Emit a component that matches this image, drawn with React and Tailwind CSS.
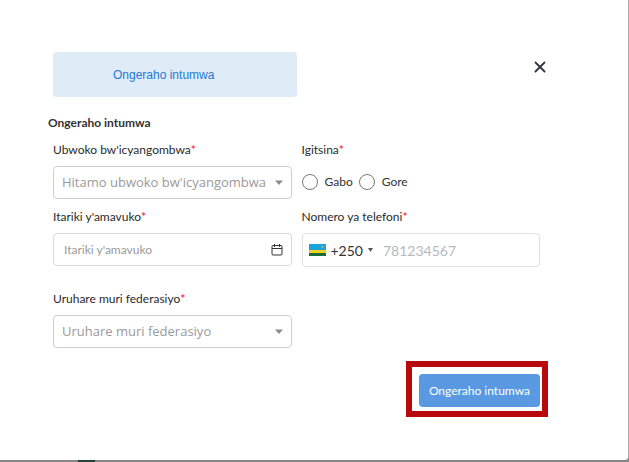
import { useState } from 'react'
import { X } from 'lucide-react'

function Label({ htmlFor, children }) {
  return (
    <label htmlFor={htmlFor} className="block mb-2 text-[12px] leading-4 text-[#2b2b2b]">
      {children}
      <span className="font-bold text-[#f5365c]">*</span>
    </label>
  )
}

function SelectField({ id, label, placeholder, options }) {
  return (
    <div>
      <Label htmlFor={id}>{label}</Label>
      <div className="relative">
        <select
          id={id}
          defaultValue=""
          className="block w-full h-[33px] appearance-none rounded border border-[#cfcfcf] bg-white pl-2 pr-6 text-[13px] text-[#9a9a9a] font-['Open_Sans',sans-serif] outline-none"
        >
          <option value="">{placeholder}</option>
          {options.map((o) => (
            <option key={o} value={o}>{o}</option>
          ))}
        </select>
        <svg className="absolute right-2 top-3.5 w-2.5 h-1.5 pointer-events-none" viewBox="0 0 10 6" fill="#8c8c8c">
          <path d="M1 0.5h8L5 5z" />
        </svg>
      </div>
    </div>
  )
}

function Flag() {
  return (
    <svg className="w-[17px] h-3 flex-shrink-0" viewBox="0 0 17 12">
      <rect width="17" height="6" fill="#1aa3dc" />
      <rect y="6" width="17" height="3" fill="#f2d21f" />
      <rect y="9" width="17" height="3" fill="#1c6b3a" />
      <circle cx="13.5" cy="2.8" r="1.1" fill="#a9c25a" />
    </svg>
  )
}

function CalendarIcon() {
  return (
    <svg className="w-3 h-3 flex-shrink-0" viewBox="0 0 12 12" fill="none" stroke="#333" strokeWidth="1">
      <rect x="1" y="1.5" width="10" height="9.5" rx="1" />
      <path d="M1 4.5h10M3.5 0v3M8.5 0v3" />
    </svg>
  )
}

function App() {
  const [gender, setGender] = useState('')
  const [birthDate, setBirthDate] = useState('')
  const [phone, setPhone] = useState('')

  return (
    <div className="min-h-screen flex flex-col bg-[#858585] font-['Lato',sans-serif]">
      <div className="flex-grow pt-13 pl-12 pr-[88px] bg-white border-r border-[#a8a8a8] rounded-br">
        {/* Header */}
        <div className="flex items-start justify-between pl-[5px]">
          <div className="w-1/2 h-[45px] flex items-center rounded bg-[#dfebf7] pl-15 text-[12px] text-[#1f78d8] font-['Liberation_Sans',sans-serif]">
            Ongeraho intumwa
          </div>
          <button type="button" aria-label="Funga" className="-mr-[9px] mt-1.5 text-[#2f3640]">
            <X size={18} strokeWidth={2.4} />
          </button>
        </div>

        <h2 className="mt-[18px] text-[12px] leading-4 font-bold text-[#333]">Ongeraho intumwa</h2>

        {/* Form */}
        <form className="mt-[11px] pl-[5px]" onSubmit={(e) => e.preventDefault()}>
          <div className="grid grid-cols-2 gap-x-2.5 gap-y-2.5">
            <SelectField
              id="document"
              label="Ubwoko bw'icyangombwa"
              placeholder="Hitamo ubwoko bw'icyangombwa"
              options={['Indangamuntu', 'Pasiporo']}
            />

            <fieldset>
              <legend className="mb-2 text-[12px] leading-4 text-[#2b2b2b]">
                Igitsina<span className="font-bold text-[#f5365c]">*</span>
              </legend>
              <div className="flex items-center gap-1.5 h-8 text-[12px] text-[#333]">
                {['Gabo', 'Gore'].map((g) => (
                  <label key={g} className="flex items-center gap-[7px]">
                    <input
                      type="radio"
                      name="gender"
                      value={g}
                      checked={gender === g}
                      onChange={() => setGender(g)}
                      className="appearance-none w-4 h-4 rounded-full border border-[#777] checked:border-4"
                    />
                    {g}
                  </label>
                ))}
              </div>
            </fieldset>

            <div>
              <Label htmlFor="birth">Itariki y'amavuko</Label>
              <div className="flex items-center h-[33px] rounded border border-[#d6d9dd] pl-2.5 pr-2">
                <input
                  id="birth"
                  value={birthDate}
                  onChange={(e) => setBirthDate(e.target.value)}
                  placeholder="Itariki y'amavuko"
                  className="flex-grow min-w-0 text-[12px] outline-none placeholder:text-[#9a9a9a]"
                />
                <CalendarIcon />
              </div>
            </div>

            <div>
              <Label htmlFor="phone">Nomero ya telefoni</Label>
              <div className="flex items-center h-[34px] rounded border border-[#dde0e4] px-1.5">
                <button type="button" className="flex items-center gap-[5px] text-[14px] text-[#333]">
                  <Flag />
                  +250
                  <svg className="w-[5px] h-1" viewBox="0 0 5 4" fill="#555">
                    <path d="M0 0h5L2.5 4z" />
                  </svg>
                </button>
                <input
                  id="phone"
                  type="tel"
                  value={phone}
                  onChange={(e) => setPhone(e.target.value)}
                  placeholder="781234567"
                  className="flex-grow min-w-0 ml-2.5 text-[14px] outline-none placeholder:text-[#b5babf]"
                />
              </div>
            </div>

            <div className="mt-3.5">
              <SelectField
                id="role"
                label="Uruhare muri federasiyo"
                placeholder="Uruhare muri federasiyo"
                options={['Umuyobozi', 'Umunyamuryango']}
              />
            </div>
          </div>

          <div className="flex justify-end mt-[13px] -mr-2">
            <div className="border-6 border-[#b80a0d] pt-[7px] pl-[7px] pr-0.5 pb-1">
              <button type="submit" className="block h-[33px] px-2.5 rounded bg-[#5899e2] text-[12px] text-white">
                Ongeraho intumwa
              </button>
            </div>
          </div>
        </form>
      </div>
      {/* Strip of the page behind the dialog */}
      <div className="h-0.5 pl-[78px]">
        <div className="w-[17px] h-full bg-[#24443a]"></div>
      </div>
    </div>
  )
}

export default App
